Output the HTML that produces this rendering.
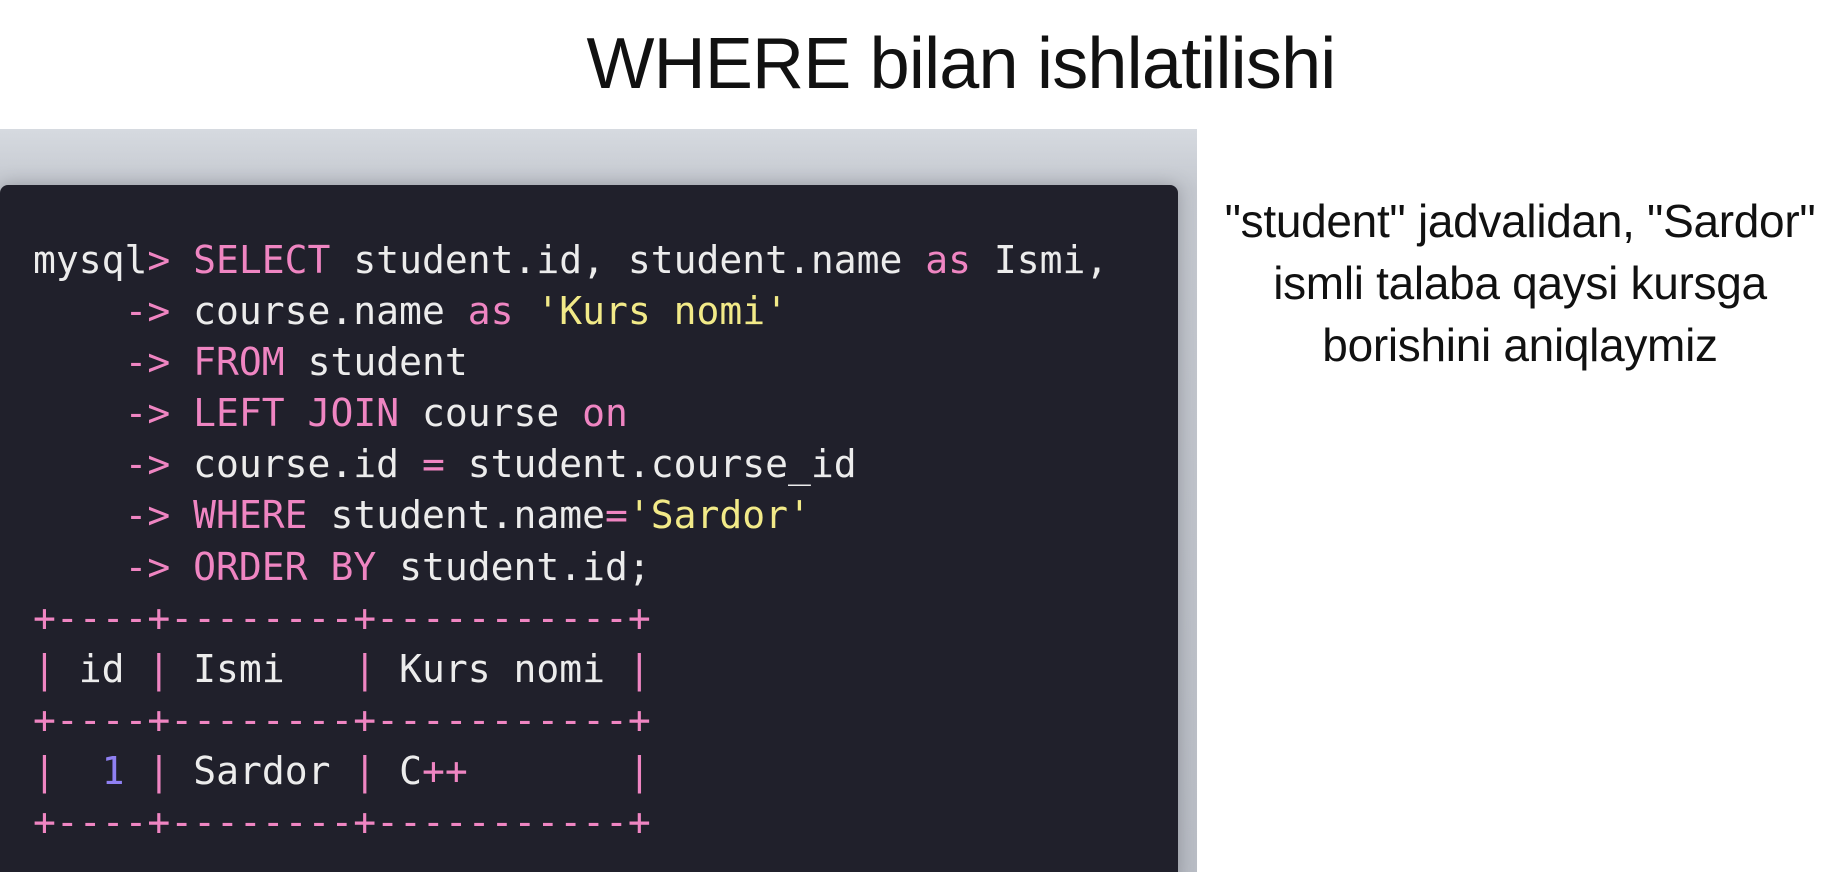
<!DOCTYPE html>
<html><head><meta charset="utf-8"><style>
html,body{margin:0;padding:0;background:#fff;width:1843px;height:872px;overflow:hidden;position:relative}
.title{position:absolute;left:0;width:1922px;top:23px;text-align:center;font-family:"Liberation Sans",sans-serif;font-size:72px;color:#111;letter-spacing:-0.8px}
.panel{position:absolute;left:0;top:129px;width:1197px;height:743px;background:linear-gradient(180deg,#d6dae0 0%,#c4c8cf 8%,#b9bdc5 100%)}
.box{position:absolute;left:0;top:185px;width:1178px;height:700px;background:#20202b;border-radius:8px;box-shadow:0 0 18px rgba(60,60,70,.35)}
pre{position:absolute;left:33px;top:235px;margin:0;font-family:"DejaVu Sans Mono","Liberation Mono",monospace;font-size:38px;line-height:51.1px;color:#ececec}
.k{color:#ef85c2}.s{color:#f2ea88}.n{color:#8f80f2}
.side{position:absolute;left:1210px;width:620px;top:190px;text-align:center;font-family:"Liberation Sans",sans-serif;font-size:46px;line-height:62px;color:#111;letter-spacing:-0.3px}
</style></head><body>
<div class="title">WHERE bilan ishlatilishi</div>
<div class="panel"></div>
<div class="box"></div>
<pre>mysql<span class="k">&gt;</span> <span class="k">SELECT</span> student.id, student.name <span class="k">as</span> Ismi,
    <span class="k">-&gt;</span> course.name <span class="k">as</span> <span class="s">'Kurs nomi'</span>
    <span class="k">-&gt;</span> <span class="k">FROM</span> student
    <span class="k">-&gt;</span> <span class="k">LEFT JOIN</span> course <span class="k">on</span>
    <span class="k">-&gt;</span> course.id <span class="k">=</span> student.course_id
    <span class="k">-&gt;</span> <span class="k">WHERE</span> student.name<span class="k">=</span><span class="s">'Sardor'</span>
    <span class="k">-&gt;</span> <span class="k">ORDER BY</span> student.id;
<span class="k">+----+--------+-----------+</span>
<span class="k">|</span> id <span class="k">|</span> Ismi   <span class="k">|</span> Kurs nomi <span class="k">|</span>
<span class="k">+----+--------+-----------+</span>
<span class="k">|</span>  <span class="n">1</span> <span class="k">|</span> Sardor <span class="k">|</span> C<span class="k">++</span>       <span class="k">|</span>
<span class="k">+----+--------+-----------+</span></pre>
<div class="side">"student" jadvalidan, "Sardor"<br>ismli talaba qaysi kursga<br>borishini aniqlaymiz</div>
</body></html>
